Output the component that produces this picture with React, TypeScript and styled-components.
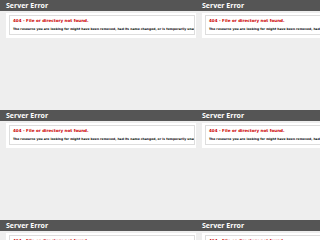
import styled, { createGlobalStyle } from "styled-components";

const GlobalStyle = createGlobalStyle`
  html, body {
    margin: 0;
    padding: 0;
    background: #eeeeee;
    overflow: hidden;
  }
`;

const Grid = styled.div`
  display: grid;
  grid-template-columns: repeat(2, 196px);
  grid-auto-rows: 110px;
  width: 320px;
  height: 240px;
  overflow: hidden;
`;

const Tile = styled.div`
  background: #eeeeee;
  overflow: hidden;
  font-family: "DejaVu Sans", Verdana, sans-serif;
`;

const Header = styled.div`
  background: #555555;
  height: 11px;
  padding: 0 6px;
  display: flex;
  align-items: center;
`;

const Title = styled.h1`
  margin: 0;
  font-family: "Open Sans", "DejaVu Sans", sans-serif;
  font-weight: 700;
  font-size: 7px;
  line-height: 11px;
  color: #ffffff;
  white-space: nowrap;
`;

const Container = styled.div`
  background: #ffffff;
  margin: 2px 0 0 6px;
  padding: 2px 1px 3px 3px;
`;

const Fieldset = styled.div`
  border: 1px solid #dddddd;
  padding: 1px 3px 3px 3px;
  overflow: hidden;
`;

const Code = styled.h2`
  margin: 0;
  font-size: 4.1px;
  line-height: 7px;
  font-weight: 700;
  color: #cc0000;
  white-space: nowrap;
`;

const Message = styled.h3`
  margin: 3px 0 0 0;
  font-size: 3.05px;
  line-height: 4px;
  font-weight: 700;
  color: #000000;
  white-space: nowrap;
`;

function ErrorPage() {
  return (
    <Tile>
      <Header>
        <Title>Server Error</Title>
      </Header>
      <Container>
        <Fieldset>
          <Code>404 - File or directory not found.</Code>
          <Message>
            The resource you are looking for might have been removed, had its
            name changed, or is temporarily unavailable.
          </Message>
        </Fieldset>
      </Container>
    </Tile>
  );
}

export default function App() {
  return (
    <>
      <GlobalStyle />
      <Grid>
        {[0, 1, 2, 3, 4, 5].map((i) => (
          <ErrorPage key={i} />
        ))}
      </Grid>
    </>
  );
}
